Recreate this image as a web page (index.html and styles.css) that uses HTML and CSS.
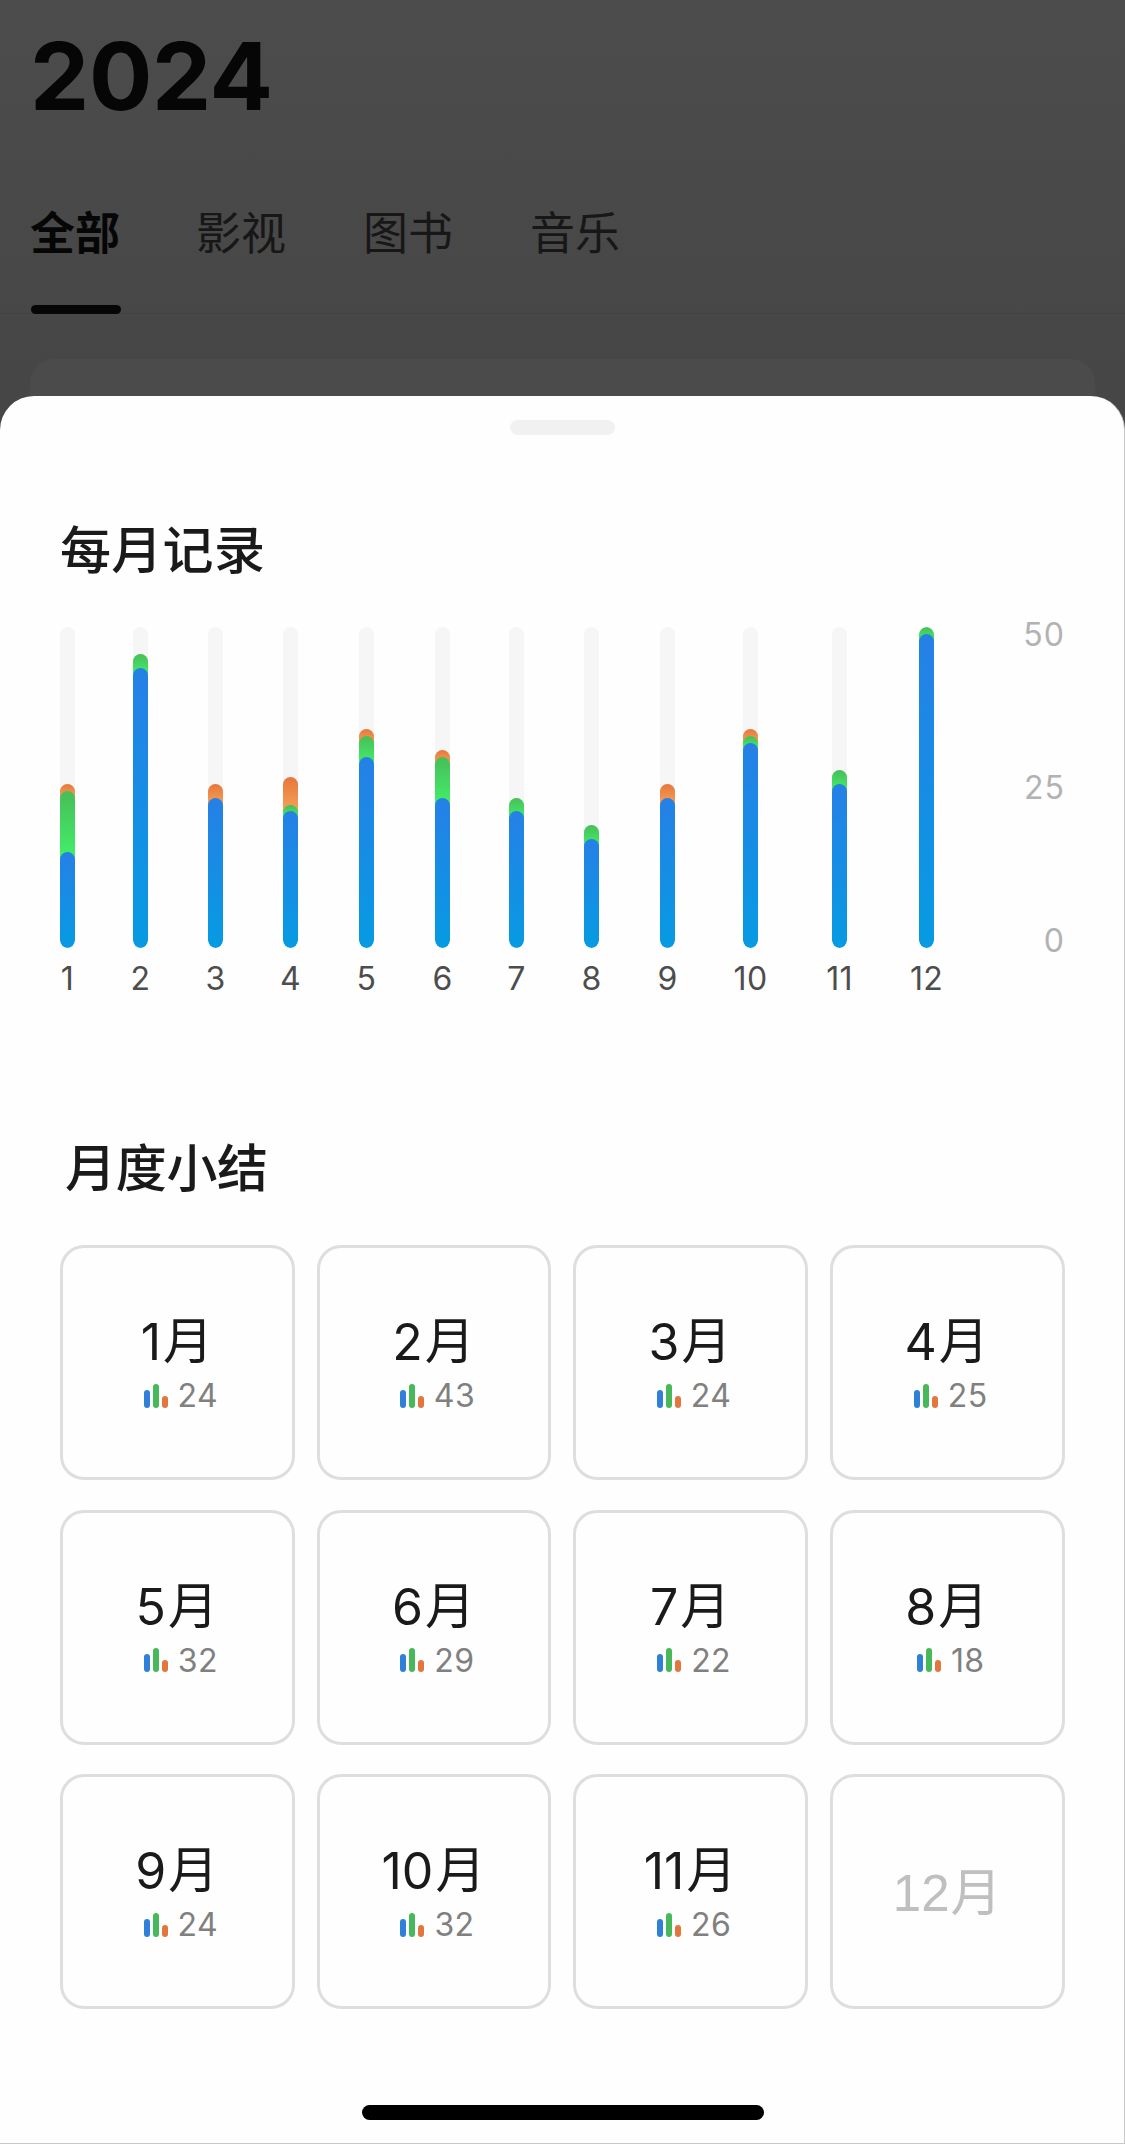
FILE: index.html
```html
<!DOCTYPE html>
<html lang="zh-CN">
<head>
<meta charset="utf-8">
<title>2024</title>
<link rel="stylesheet" href="styles.css">
</head>
<body>
<svg class="defs" width="0" height="0" aria-hidden="true">
  <symbol id="bars" viewBox="0 0 24 24">
    <rect x="0" y="6" width="6" height="18" rx="3" fill="#2f80d8"/>
    <rect x="9" y="0" width="6" height="24" rx="3" fill="#48b95a"/>
    <rect x="18" y="12" width="6" height="12" rx="3" fill="#e3763f"/>
  </symbol>
</svg>
<div class="screen">
  <header class="page">
    <h1 class="year">2024</h1>
    <nav class="tabs">
      <span class="tab active">全部</span>
      <span class="tab">影视</span>
      <span class="tab">图书</span>
      <span class="tab">音乐</span>
    </nav>
    <div class="page-card"></div>
  </header>
  <main class="sheet">
    <div class="handle"></div>
    <h2 class="title">每月记录</h2>
    <section class="chart">
      <div class="months">
        <div class="month"><div class="track"><i class="music" style="--n:1"></i><i class="book" style="--n:9"></i><i class="film" style="--n:14"></i></div><span>1</span></div>
        <div class="month"><div class="track"><i class="book" style="--n:2"></i><i class="film" style="--n:41"></i></div><span>2</span></div>
        <div class="month"><div class="track"><i class="music" style="--n:2"></i><i class="film" style="--n:22"></i></div><span>3</span></div>
        <div class="month"><div class="track"><i class="music" style="--n:4"></i><i class="book" style="--n:1"></i><i class="film" style="--n:20"></i></div><span>4</span></div>
        <div class="month"><div class="track"><i class="music" style="--n:1"></i><i class="book" style="--n:3"></i><i class="film" style="--n:28"></i></div><span>5</span></div>
        <div class="month"><div class="track"><i class="music" style="--n:1"></i><i class="book" style="--n:6"></i><i class="film" style="--n:22"></i></div><span>6</span></div>
        <div class="month"><div class="track"><i class="book" style="--n:2"></i><i class="film" style="--n:20"></i></div><span>7</span></div>
        <div class="month"><div class="track"><i class="book" style="--n:2"></i><i class="film" style="--n:16"></i></div><span>8</span></div>
        <div class="month"><div class="track"><i class="music" style="--n:2"></i><i class="film" style="--n:22"></i></div><span>9</span></div>
        <div class="month"><div class="track"><i class="music" style="--n:1"></i><i class="book" style="--n:1"></i><i class="film" style="--n:30"></i></div><span>10</span></div>
        <div class="month"><div class="track"><i class="book" style="--n:2"></i><i class="film" style="--n:24"></i></div><span>11</span></div>
        <div class="month"><div class="track"><i class="book" style="--n:1"></i><i class="film" style="--n:46"></i></div><span>12</span></div>
      </div>
      <div class="axis"><span>50</span><span>25</span><span>0</span></div>
    </section>
    <h2 class="title summary">月度小结</h2>
    <section class="grid">
      <div class="card"><div class="name">1<b>月</b></div><div class="count"><svg class="icon"><use href="#bars"/></svg>24</div></div>
      <div class="card"><div class="name">2<b>月</b></div><div class="count"><svg class="icon"><use href="#bars"/></svg>43</div></div>
      <div class="card"><div class="name">3<b>月</b></div><div class="count"><svg class="icon"><use href="#bars"/></svg>24</div></div>
      <div class="card"><div class="name">4<b>月</b></div><div class="count"><svg class="icon"><use href="#bars"/></svg>25</div></div>
      <div class="card"><div class="name">5<b>月</b></div><div class="count"><svg class="icon"><use href="#bars"/></svg>32</div></div>
      <div class="card"><div class="name">6<b>月</b></div><div class="count"><svg class="icon"><use href="#bars"/></svg>29</div></div>
      <div class="card"><div class="name">7<b>月</b></div><div class="count"><svg class="icon"><use href="#bars"/></svg>22</div></div>
      <div class="card"><div class="name">8<b>月</b></div><div class="count"><svg class="icon"><use href="#bars"/></svg>18</div></div>
      <div class="card"><div class="name">9<b>月</b></div><div class="count"><svg class="icon"><use href="#bars"/></svg>24</div></div>
      <div class="card"><div class="name">10<b>月</b></div><div class="count"><svg class="icon"><use href="#bars"/></svg>32</div></div>
      <div class="card"><div class="name">11<b>月</b></div><div class="count"><svg class="icon"><use href="#bars"/></svg>26</div></div>
      <div class="card empty"><div class="name">12<b>月</b></div></div>
    </section>
    <div class="home"></div>
  </main>
</div>
</body>
</html>
```
FILE: styles.css
```css
* { box-sizing: border-box; }
body {
  margin: 0;
  font-family: "Inter", "Noto Sans CJK SC", sans-serif;
}
h1, h2 { margin: 0; }
.defs { display: block; }
.screen {
  width: 1125px;
  height: 2144px;
  display: flex;
  flex-direction: column;
  overflow: hidden;
  background: linear-gradient(#4c4c4c 0, #464646 400px, #464646 100%);
}

/* dimmed page behind the sheet */
.page {
  height: 396px;
  flex: none;
  display: flex;
  flex-direction: column;
}
.year {
  height: 152px;
  padding: 16px 0 0 30px;
  font-size: 94px;
  line-height: 120px;
  font-weight: 700;
  letter-spacing: -0.3px;
  color: #060606;
}
.tabs {
  height: 162px;
  flex: none;
  padding-left: 31px;
  display: flex;
  gap: 77px;
  border-bottom: 1px solid #414141;
}
.tab {
  width: 90px;
  height: 162px;
  padding-top: 52px;
  font-size: 45px;
  line-height: 60px;
  color: #171717;
  white-space: nowrap;
  text-indent: -2px;
}
.tab.active {
  font-weight: 700;
  color: #060606;
  text-indent: -1px;
  display: flex;
  flex-direction: column;
  justify-content: space-between;
}
.tab.active::after {
  content: "";
  height: 9px;
  border-radius: 4.5px;
  background: #060606;
}
.page-card {
  margin: 45px 30px 0;
  flex: 1;
  border-radius: 24px 24px 0 0;
  background: #4b4b4b;
}

/* bottom sheet */
.sheet {
  flex: 1;
  padding: 24px 59px 0 60px;
  border-right: 1px solid #c8c8c8;
  border-bottom: 1px solid #c8c8c8;
  border-radius: 34px 34px 0 0;
  background: #fefefe;
  display: flex;
  flex-direction: column;
}
.handle {
  width: 105px;
  height: 15px;
  flex: none;
  align-self: center;
  border-radius: 7.5px;
  background: #f1f1f1;
}
.title {
  height: 72px;
  flex: none;
  margin-top: 80px;
  font-size: 51px;
  line-height: 72px;
  font-weight: 500;
  letter-spacing: 0.3px;
  color: #1a1a1a;
}
.chart {
  margin-top: 40px;
  height: 376px;
  flex: none;
  display: flex;
  justify-content: space-between;
}
.months {
  display: grid;
  grid-template-columns: 15px 19px 19px 19px 21px 19px 17px 21px 19px 35px 31px 31px;
  column-gap: 56px;
}
.month {
  display: flex;
  flex-direction: column;
  align-items: center;
  font-size: 32px;
  line-height: 40px;
  color: #4d4d4d;
}
.month span { margin-top: 11px; letter-spacing: 0.3px; }
.track {
  width: 15px;
  height: 321px;
  flex: none;
  display: flex;
  flex-direction: column;
  justify-content: flex-end;
  overflow: hidden;
  border-radius: 7.5px;
  background: #f6f6f6;
}
.track i {
  box-sizing: content-box;
  flex: none;
  height: calc(var(--n) * 100% / 47);
  padding-bottom: 7px;
  margin-bottom: -7px;
  border-radius: 7.5px 7.5px 0 0;
}
.track .film {
  padding-bottom: 0;
  margin-bottom: 0;
  border-radius: 7.5px;
  background: linear-gradient(#2680e6, #069be2);
}
.track .book { background: linear-gradient(#48bd58, #42f06a); }
.track .music { background: linear-gradient(#e6773c, #f7a258); }
.axis {
  height: 346px;
  margin-top: -12px;
  display: flex;
  flex-direction: column;
  justify-content: space-between;
  text-align: right;
  font-size: 32px;
  line-height: 40px;
  letter-spacing: 1px;
  color: #b2b2b2;
}
.summary {
  margin-top: 130px;
  padding-left: 5px;
  letter-spacing: -0.3px;
}
.grid {
  margin-top: 40px;
  margin-right: 0.5px;
  display: grid;
  grid-template-columns: repeat(4, 1fr);
  grid-auto-rows: 235px;
  column-gap: 22px;
  row-gap: 29.5px;
}
.card {
  border: 3px solid #dedede;
  border-radius: 24px;
  display: flex;
  flex-direction: column;
  align-items: center;
  padding-top: 60px;
}
.name {
  height: 68px;
  display: flex;
  font-size: 50px;
  line-height: 68px;
  color: #1a1a1a;
}
.name b {
  font-weight: 400;
  line-height: 67px;
  margin-left: 2px;
}
.card:not(.empty) .name { margin-right: 1px; }
.count {
  margin-left: 7px;
  display: flex;
  align-items: center;
  gap: 10px;
  font-size: 32px;
  line-height: 40px;
  letter-spacing: 0.4px;
  color: #808080;
}
.icon { width: 24px; height: 24px; margin-top: -1px; }
.empty { justify-content: center; padding-top: 4px; }
.empty .name {
  font-family: "Liberation Sans", "Noto Sans CJK SC", sans-serif;
  font-size: 51px;
  color: #bfbfbf;
}
.empty .name b { margin-left: 1px; }
.home {
  width: 402px;
  height: 15px;
  margin-top: 96px;
  align-self: center;
  border-radius: 7.5px;
  background: #000;
}
```
